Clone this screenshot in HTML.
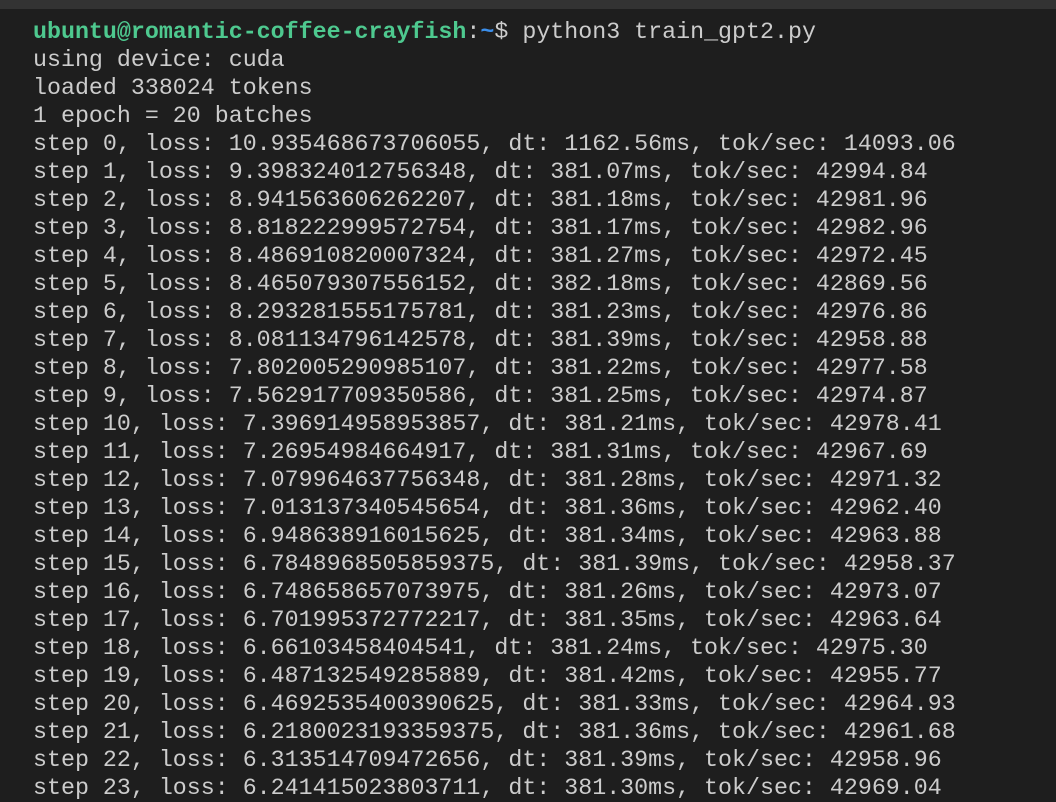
<!DOCTYPE html>
<html><head><meta charset="utf-8"><style>
html,body{margin:0;padding:0;}
body{width:1056px;height:798px;background:#1e1e1e;overflow:hidden;position:relative;}
.bar{position:absolute;top:0;left:0;width:1056px;height:9px;background:#333333;}
pre{position:absolute;left:33px;top:18px;margin:0;font-family:"Liberation Mono","DejaVu Sans Mono",monospace;font-size:23.3px;line-height:28px;color:#cccccc;white-space:pre;}
.g{color:#4ec98f;font-weight:bold;}
.b{color:#3b8eea;font-weight:bold;}
</style></head><body>
<div class="bar"></div>
<pre><span class="g">ubuntu@romantic-coffee-crayfish</span>:<span class="b">~</span>$ python3 train_gpt2.py
using device: cuda
loaded 338024 tokens
1 epoch = 20 batches
step 0, loss: 10.935468673706055, dt: 1162.56ms, tok/sec: 14093.06
step 1, loss: 9.398324012756348, dt: 381.07ms, tok/sec: 42994.84
step 2, loss: 8.941563606262207, dt: 381.18ms, tok/sec: 42981.96
step 3, loss: 8.818222999572754, dt: 381.17ms, tok/sec: 42982.96
step 4, loss: 8.486910820007324, dt: 381.27ms, tok/sec: 42972.45
step 5, loss: 8.465079307556152, dt: 382.18ms, tok/sec: 42869.56
step 6, loss: 8.293281555175781, dt: 381.23ms, tok/sec: 42976.86
step 7, loss: 8.081134796142578, dt: 381.39ms, tok/sec: 42958.88
step 8, loss: 7.802005290985107, dt: 381.22ms, tok/sec: 42977.58
step 9, loss: 7.562917709350586, dt: 381.25ms, tok/sec: 42974.87
step 10, loss: 7.396914958953857, dt: 381.21ms, tok/sec: 42978.41
step 11, loss: 7.26954984664917, dt: 381.31ms, tok/sec: 42967.69
step 12, loss: 7.079964637756348, dt: 381.28ms, tok/sec: 42971.32
step 13, loss: 7.013137340545654, dt: 381.36ms, tok/sec: 42962.40
step 14, loss: 6.948638916015625, dt: 381.34ms, tok/sec: 42963.88
step 15, loss: 6.7848968505859375, dt: 381.39ms, tok/sec: 42958.37
step 16, loss: 6.748658657073975, dt: 381.26ms, tok/sec: 42973.07
step 17, loss: 6.701995372772217, dt: 381.35ms, tok/sec: 42963.64
step 18, loss: 6.66103458404541, dt: 381.24ms, tok/sec: 42975.30
step 19, loss: 6.487132549285889, dt: 381.42ms, tok/sec: 42955.77
step 20, loss: 6.4692535400390625, dt: 381.33ms, tok/sec: 42964.93
step 21, loss: 6.2180023193359375, dt: 381.36ms, tok/sec: 42961.68
step 22, loss: 6.313514709472656, dt: 381.39ms, tok/sec: 42958.96
step 23, loss: 6.241415023803711, dt: 381.30ms, tok/sec: 42969.04</pre>
</body></html>
